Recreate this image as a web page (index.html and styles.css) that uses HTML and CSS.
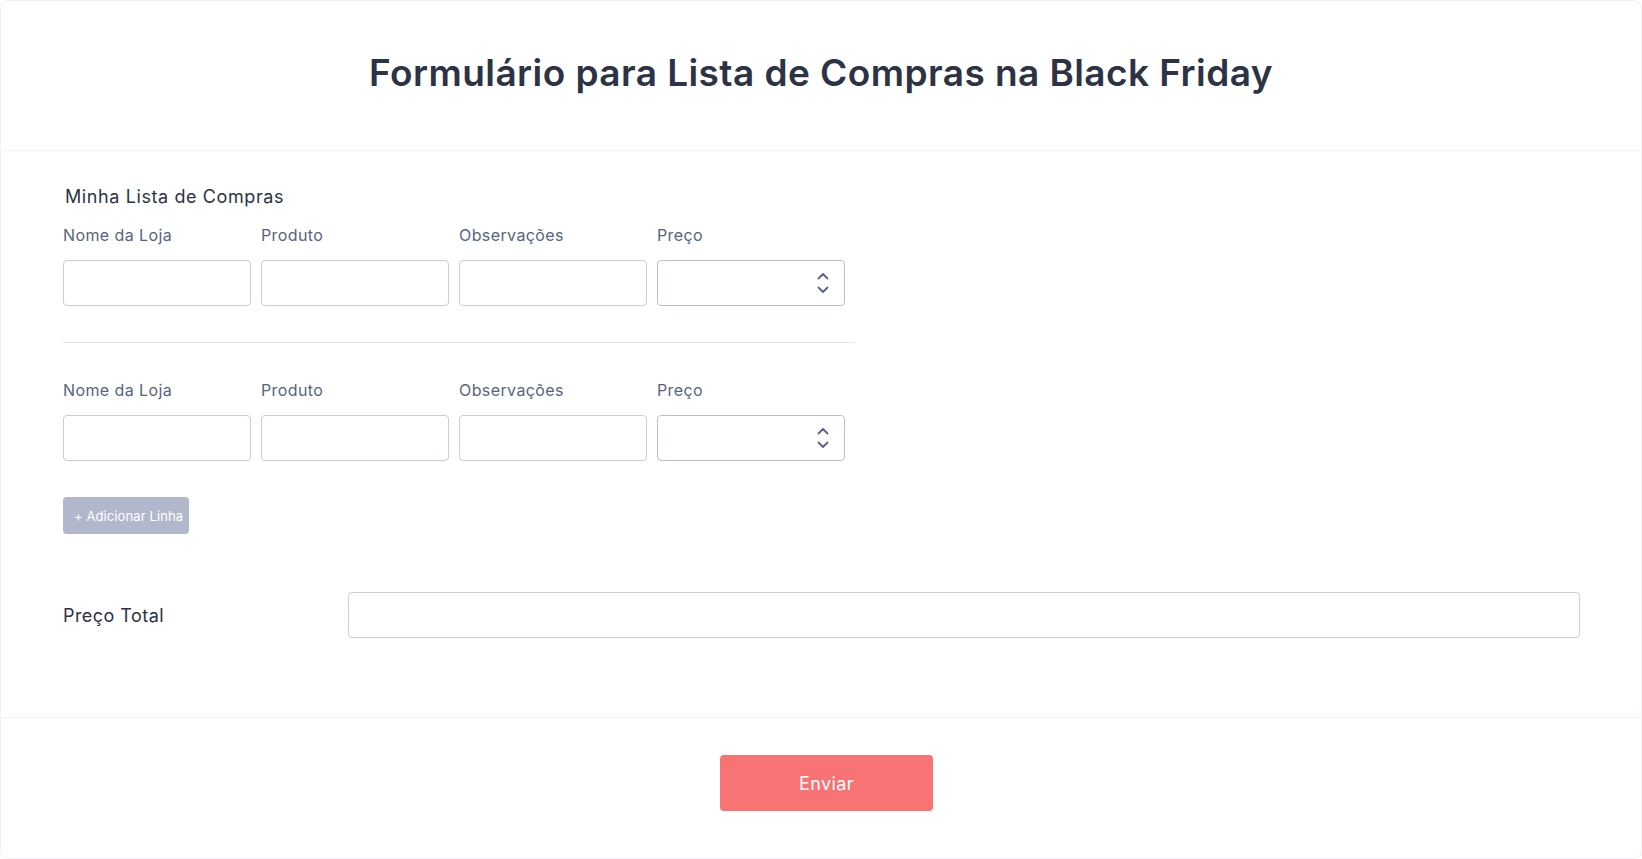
FILE: index.html
```html
<!DOCTYPE html>
<html lang="pt">
<head>
<meta charset="utf-8">
<title>Formulário para Lista de Compras na Black Friday</title>
<link rel="stylesheet" href="styles.css">
</head>
<body>
<div class="card">
  <header class="header">
    <h1 class="title">Formulário para Lista de Compras na Black Friday</h1>
  </header>
  <section class="content">
    <div class="list-title">Minha Lista de Compras</div>
    <div class="table">
      <div class="row">
        <div class="cell"><label class="lbl">Nome da Loja</label><div class="inp"></div></div>
        <div class="cell"><label class="lbl">Produto</label><div class="inp"></div></div>
        <div class="cell"><label class="lbl">Observações</label><div class="inp"></div></div>
        <div class="cell"><label class="lbl">Preço</label><div class="inp num">
          <svg class="spin" width="12" height="24" viewBox="0 0 12 24"><path d="M1.5 7.5 L6 3 L10.5 7.5" fill="none" stroke="#57647e" stroke-width="1.8" stroke-linecap="round" stroke-linejoin="round"/><path d="M1.5 16.5 L6 21 L10.5 16.5" fill="none" stroke="#57647e" stroke-width="1.8" stroke-linecap="round" stroke-linejoin="round"/></svg>
        </div></div>
      </div>
      <div class="divider"></div>
      <div class="row">
        <div class="cell"><label class="lbl">Nome da Loja</label><div class="inp"></div></div>
        <div class="cell"><label class="lbl">Produto</label><div class="inp"></div></div>
        <div class="cell"><label class="lbl">Observações</label><div class="inp"></div></div>
        <div class="cell"><label class="lbl">Preço</label><div class="inp num">
          <svg class="spin" width="12" height="24" viewBox="0 0 12 24"><path d="M1.5 7.5 L6 3 L10.5 7.5" fill="none" stroke="#57647e" stroke-width="1.8" stroke-linecap="round" stroke-linejoin="round"/><path d="M1.5 16.5 L6 21 L10.5 16.5" fill="none" stroke="#57647e" stroke-width="1.8" stroke-linecap="round" stroke-linejoin="round"/></svg>
        </div></div>
      </div>
    </div>
    <button class="add-btn">+ Adicionar Linha</button>
    <div class="total">
      <label class="total-lbl">Preço Total</label>
      <div class="inp total-inp"></div>
    </div>
  </section>
  <footer class="footer">
    <button class="submit">Enviar</button>
  </footer>
</div>
</body>
</html>
```
FILE: styles.css
```css
* { box-sizing: border-box; }
html, body { margin: 0; padding: 0; background: #ffffff; }
body { font-family: Inter, "Noto Sans", sans-serif; color: #2c3345; }
.card {
  width: 1642px;
  height: 859px;
  border: 1px solid #f1f1f8;
  border-radius: 8px;
  background: #fff;
  display: flex;
  flex-direction: column;
}
.header {
  height: 150px;
  border-bottom: 1px solid #f3f3fe;
  display: flex;
  align-items: center;
  justify-content: center;
}
.title {
  margin: 0;
  font-size: 37px;
  font-weight: 600;
  color: #2c3345;
  letter-spacing: 0.43px;
  line-height: 44px;
  padding-bottom: 5px;
}
.content {
  padding: 36px 61px 0 62px;
  height: 567px;
  border-bottom: 1px solid #f3f3fe;
}
.list-title {
  font-size: 18px;
  line-height: 20px;
  padding-left: 2px;
  letter-spacing: 0.6px;
  color: #2c3345;
}
.table { width: 792px; margin-top: 19px; }
.row { display: flex; gap: 10px; }
.cell { display: flex; flex-direction: column; width: 188px; }
.lbl {
  font-size: 16px;
  line-height: 18px;
  letter-spacing: 0.4px;
  color: #57647e;
  margin-bottom: 16px;
}
.inp {
  height: 46px;
  border: 1px solid #c9ceda;
  border-radius: 4px;
  background: #fff;
}
.num {
  display: flex;
  align-items: center;
  justify-content: flex-end;
  padding-right: 15px;
  border-color: #b8bfcf;
}
.spin { display: block; }
.divider {
  height: 1px;
  background: #e3e5ec;
  margin: 36px 0 38px;
}
.add-btn {
  margin-top: 36px;
  height: 37px;
  width: 126px;
  border: none;
  border-radius: 4px;
  background: #b1b8cb;
  color: #fff;
  font-family: Inter, "Noto Sans", sans-serif;
  font-size: 13px;
  letter-spacing: 0.1px;
  padding: 0 0 0 11px;
  text-align: left;
  white-space: nowrap;
}
.total {
  margin-top: 58px;
  display: flex;
  align-items: center;
}
.total-lbl {
  width: 285px;
  font-size: 18px;
  letter-spacing: 0.45px;
  color: #2c3345;
}
.total-inp { flex: 1; }
.footer {
  flex: 1;
  display: flex;
  justify-content: center;
  align-items: flex-start;
  padding-top: 37px;
  padding-left: 11px;
}
.submit {
  width: 213px;
  height: 56px;
  border: none;
  border-radius: 4px;
  background: #f87373;
  color: #fff;
  font-family: Inter, "Noto Sans", sans-serif;
  font-size: 18px;
  font-weight: 400;
  letter-spacing: 0.4px;
}
```
